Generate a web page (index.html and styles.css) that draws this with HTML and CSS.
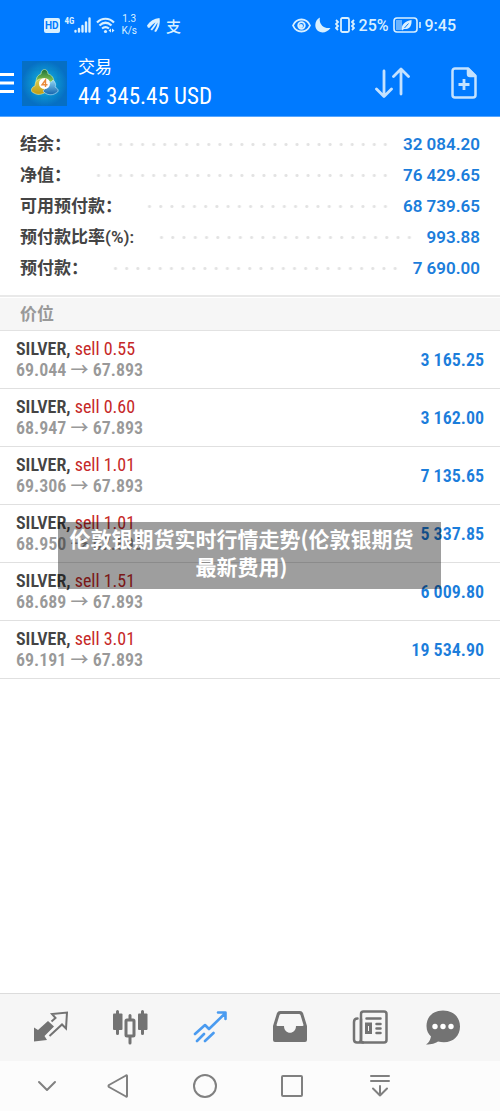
FILE: index.html
```html
<!DOCTYPE html>
<html lang="zh-CN">
<head>
<meta charset="utf-8">
<meta name="viewport" content="width=device-width, initial-scale=1">
<title>交易</title>
<link rel="stylesheet" href="styles.css">
</head>
<body>
<div class="app">
  <div class="status">
    <div class="status-group left">
      <span class="hd">HD</span>
      <span class="signal"><span class="net">4G</span>
        <svg width="17" height="16" viewBox="0 0 17 16" fill="none" stroke="currentColor" stroke-width="2.400" stroke-linecap="round"><path d="M1.500 14v.5M5 12v2.500M8.500 9v5.500M12 5.500v9M15.500 1.500v13"/></svg>
      </span>
      <svg width="20" height="17" viewBox="0 0 20 17" fill="none" stroke="currentColor" stroke-width="2.200"><path d="M1 5.500c5-5 12-5 17 0M3.500 8.500c4-3.700 8-3.700 12 0M6 11.500c2.500-2 4.500-2 7 0"/><circle cx="9.500" cy="14.500" r="1.600" fill="currentColor" stroke="none"/><path d="M15 11.500l-2.500 2 2.500 2zM16 11.500l2.500 2-2.500 2z" fill="currentColor" stroke="none"/></svg>
      <span class="speed"><span>1.3</span><span>K/s</span></span>
      <svg class="spaced" width="14" height="15" viewBox="0 0 14 15" fill="currentColor"><path d="M0 7.500C3 3 7 .5 12.500 0c1 5-.5 10-3.500 14l-1.800-.8C9.500 9.500 10.500 7 10.500 4.500 8.500 8 7 10 5 12.500l-1.500-1C5.500 9 7 7 8.500 4.200 6 6 4 8 2.200 10L.8 9.500z"/></svg>
      <span class="pay">支</span>
    </div>
    <div class="status-group">
      <svg width="19" height="15" viewBox="0 0 19 15" fill="none" stroke="currentColor" stroke-width="1.800"><path d="M1 7.500C4.500-.5 14.500-.5 18 7.500c-3.500 8-13.500 8-17 0z"/><circle cx="9.500" cy="7.500" r="3.300"/><circle cx="9" cy="8" r="2" fill="currentColor" stroke="none"/></svg>
      <svg width="16" height="16" viewBox="0 0 16 16" fill="currentColor"><path d="M5 .5C3.500 6 8 12 15.500 11 11 17.500 2 16.500.5 10-.3 6 1.500 2 5 .5z"/></svg>
      <svg width="20" height="16" viewBox="0 0 20 16" fill="none" stroke="currentColor" stroke-width="1.800"><rect x="6" y="1" width="8" height="14" rx="1.500"/><path d="M1 3l2 2-2 2 2 2-2 2 2 2M19 3l-2 2 2 2-2 2 2 2-2 2"/></svg>
      <span class="clock">25%</span>
      <svg width="28" height="16" viewBox="0 0 28 16" fill="none" stroke="currentColor" stroke-width="1.600"><rect x="1" y="1" width="23" height="14" rx="3"/><path d="M3 3h6v10H3z" fill="#68b3ff" stroke="none"/><path d="M27 5v6"/><path d="M18.500 3c.5 6-2 9.500-7.500 9l-2 1.500C8 7 12 4.500 18.500 3z" fill="currentColor" stroke="none"/><path d="M11.500 11l4-4.500" stroke="#007aff" stroke-width="1"/></svg>
      <span class="clock">9:45</span>
    </div>
  </div>

  <header class="header">
    <button class="menu" aria-label="菜单"><svg width="14" height="20" viewBox="0 0 14 20" fill="currentColor"><path d="M0 0h14v3H0zM0 8.500h14v3H0zM0 17h14v3H0z"/></svg></button>
    <svg class="logo" width="45" height="45" viewBox="0 0 45 45">
      <defs>
        <radialGradient id="sky"><stop offset="0" stop-color="#13bce0"/><stop offset="1" stop-color="#066fc4"/></radialGradient>
        <linearGradient id="green" x2="0" y2="1"><stop stop-color="#186e38"/><stop offset="1" stop-color="#9bd455"/></linearGradient>
        <linearGradient id="gold" x2="0" y2="1"><stop stop-color="#d9cf55"/><stop offset="1" stop-color="#c09a12"/></linearGradient>
        <linearGradient id="blue" x2="0" y2="1"><stop stop-color="#8fd6f5"/><stop offset="1" stop-color="#1263ad"/></linearGradient>
      </defs>
      <path d="M0 0h45v45H0z" fill="url(#sky)"/>
      <path d="M9 0v45M18 0v45M27 0v45M36 0v45M0 9h45M0 18h45M0 27h45M0 36h45" stroke="#0a80bd" stroke-opacity=".35" stroke-width=".6"/>
      <path d="M14 22c0-6 2-8 5-9 0-6 7-6 7 0 4 1 6 4 6 9l-9-3z" fill="url(#green)" stroke="#d9f2b5" stroke-width=".6"/>
      <path d="M22 18c-6-1-9 2-9 7-4 1-5 6-1 7 3 2 7 2 12-1z" fill="url(#gold)" stroke="#f7f0a0" stroke-width=".6"/>
      <path d="M31 19c3 3 3 5 2 7 4 2 4 5 1 6-4 3-10 2-13-2z" fill="url(#blue)" stroke="#c8edff" stroke-width=".6"/>
      <circle cx="22.500" cy="22.500" r="5.500" fill="#fff"/>
      <path d="M23.500 26v-7L20 23.800h5.500" fill="none" stroke="#e98a3a" stroke-width="1.400"/>
    </svg>
    <div class="account">
      <h1 class="title">交易</h1>
      <div class="balance">44 345.45 USD</div>
    </div>
    <div class="actions">
      <button aria-label="排序"><svg width="36" height="32" viewBox="0 0 36 32" fill="none" stroke="currentColor" stroke-width="2.800" stroke-linecap="round" stroke-linejoin="round"><path d="M10 4v25M2.500 22l7.500 7.500 7.500-7.500M27 27V2.500M19.500 9.500L27 2l7.500 7.500"/></svg></button>
      <button aria-label="新订单"><svg width="26" height="32" viewBox="0 0 26 32" fill="none" stroke="currentColor" stroke-width="2.500" stroke-linejoin="round"><path d="M17 1.500H4A2.500 2.500 0 0 0 1.500 4v24A2.500 2.500 0 0 0 4 30.500h18a2.500 2.500 0 0 0 2.500-2.500V9z"/><path d="M17 2v5a2 2 0 0 0 2 2h5z" fill="currentColor"/><path d="M13 12v11M7.500 17.500h11" stroke-width="2.800"/></svg></button>
    </div>
  </header>

  <main class="main">
    <dl class="summary">
      <div class="line"><dt>结余：</dt><dd>32 084.20</dd></div>
      <div class="line"><dt>净值：</dt><dd>76 429.65</dd></div>
      <div class="line"><dt>可用预付款：</dt><dd>68 739.65</dd></div>
      <div class="line"><dt>预付款比率(%):</dt><dd>993.88</dd></div>
      <div class="line"><dt>预付款：</dt><dd>7 690.00</dd></div>
    </dl>
    <h2 class="section">价位</h2>
    <ul class="positions">
      <li class="position"><div><div class="deal">SILVER, <span>sell 0.55</span></div><div class="quote">69.044 <i>→</i> 67.893</div></div><div class="profit">3 165.25</div></li>
      <li class="position"><div><div class="deal">SILVER, <span>sell 0.60</span></div><div class="quote">68.947 <i>→</i> 67.893</div></div><div class="profit">3 162.00</div></li>
      <li class="position"><div><div class="deal">SILVER, <span>sell 1.01</span></div><div class="quote">69.306 <i>→</i> 67.893</div></div><div class="profit">7 135.65</div></li>
      <li class="position"><div><div class="deal">SILVER, <span>sell 1.01</span></div><div class="quote">68.950 <i>→</i> 67.893</div></div><div class="profit">5 337.85</div></li>
      <li class="position"><div><div class="deal">SILVER, <span>sell 1.51</span></div><div class="quote">68.689 <i>→</i> 67.893</div></div><div class="profit">6 009.80</div></li>
      <li class="position"><div><div class="deal">SILVER, <span>sell 3.01</span></div><div class="quote">69.191 <i>→</i> 67.893</div></div><div class="profit">19 534.90</div></li>
    </ul>
    <div class="caption">伦敦银期货实时行情走势(伦敦银期货<br>最新费用)</div>
  </main>

  <nav class="tabs">
    <button aria-label="行情"><svg width="36" height="36" viewBox="0 0 36 36" fill="none" stroke="currentColor" stroke-width="2"><path d="M2 17.500l4 2.500 10-9 6 5.500-9.500 9.500 2.500 4-13 1.500z" fill="currentColor" stroke="none"/><path d="M19.500 11.500l4-3.500-3.500-4L35 2.500l-1 16-4-4L17.500 26"/></svg></button>
    <button aria-label="图表"><svg width="36" height="36" viewBox="0 0 36 36" fill="none" stroke="currentColor" stroke-width="3" stroke-linecap="round"><path d="M5.500 1.500v22M30.500 1.500v22M18 5.500v4M18 27v6"/><rect x="1" y="3.500" width="9.500" height="16.500" rx="1" fill="currentColor" stroke="none"/><rect x="26" y="3.500" width="9.500" height="16.500" rx="1" fill="currentColor" stroke="none"/><rect x="14" y="10" width="8" height="16" rx="1"/></svg></button>
    <button class="active" aria-label="交易" aria-current="page"><svg width="36" height="36" viewBox="0 0 36 36" fill="none" stroke="currentColor" stroke-width="2.600" stroke-linecap="round" stroke-linejoin="round"><path d="M3 24l10-9 4 4L33 3.500M26 2.500h7.500V9M5 31l7-7M13 31l8.500-8"/></svg></button>
    <button aria-label="历史"><svg width="36" height="36" viewBox="0 0 36 36" fill="currentColor"><path fill-rule="evenodd" d="M8 1h20q2 0 3 2l4 13v14q0 2-2 2H3q-2 0-2-2V16L5 3q1-2 3-2zm1 3q-1 0-1.500 1L4.500 15q0 1 1 1H12c0 9 12 9 12 0h6.500q1 0 1-1L28.500 5q-.5-1-1.500-1z"/></svg></button>
    <button aria-label="新闻"><svg width="36" height="36" viewBox="0 0 36 36" fill="none" stroke="currentColor" stroke-width="2.500" stroke-linecap="round"><rect x="9" y="1.500" width="25.500" height="31" rx="2.500"/><path d="M5.500 8.500Q2 8.500 2 12v17.500q0 3 3 3h6M9 9v20.500q0 2-2 3M14.500 8.500h14M24.500 14h4M24.500 18.500h4M24.500 23h4"/><rect x="14.500" y="14" width="4" height="8.500" stroke-width="3"/></svg></button>
    <button aria-label="信息"><svg width="36" height="36" viewBox="0 0 36 36" fill="currentColor"><path d="M18 .5C8 .5 1.500 7 1.500 16c0 5 2 8 4.500 10.500-1 4-2 6-5 8 6 0 9-1 12-3 13 3 22-4 22-15C35 7 28 .5 18 .5z"/><g fill="#fff"><circle cx="10" cy="16.500" r="2.700"/><circle cx="18" cy="16.500" r="2.700"/><circle cx="26" cy="16.500" r="2.700"/></g></svg></button>
  </nav>

  <div class="system">
    <button aria-label="收起"><svg width="24" height="24" viewBox="0 0 24 24"><path d="M4 8l8 8 8-8"/></svg></button>
    <button aria-label="返回"><svg width="24" height="24" viewBox="0 0 24 24"><path d="M21 2v20q0 1-1 .5L3 13q-1-1 0-2L20 1.500q1-.5 1 .5z"/></svg></button>
    <button aria-label="主页"><svg width="24" height="24" viewBox="0 0 24 24"><circle cx="12" cy="12" r="11"/></svg></button>
    <button aria-label="最近"><svg width="24" height="24" viewBox="0 0 24 24"><rect x="2" y="2" width="20" height="20" rx="1"/></svg></button>
    <button aria-label="通知"><svg width="24" height="24" viewBox="0 0 24 24"><path d="M3 2h18M3 7h18M12 12v9.500M5 14.500l7 7 7-7"/></svg></button>
  </div>
</div>
</body>
</html>
```

FILE: styles.css
```css
* {
  box-sizing: border-box;
}

body {
  margin: 0;
  background: #fff;
  color: #444;
  font-family: Roboto, "Noto Sans CJK SC", sans-serif;
}

h1, h2, dl, dd, ul {
  margin: 0;
  padding: 0;
}

button {
  display: flex;
  align-items: center;
  justify-content: center;
  padding: 0;
  border: 0;
  background: none;
  color: inherit;
}

svg {
  display: block;
  flex: none;
}

.app {
  display: flex;
  flex-direction: column;
  min-height: 100vh;
}

/* Phone status bar */
.status {
  display: flex;
  justify-content: space-between;
  height: 50px;
  padding: 0 44px;
  background: #007aff;
  color: #d9f0ff;
}

.status-group {
  display: flex;
  align-items: center;
  gap: 4px;
}

.left {
  gap: 5px;
}

.hd {
  padding: 0 1px;
  border-radius: 2px;
  background: #d9f0ff;
  color: #007aff;
  font-size: 10px;
  font-weight: 700;
  line-height: 15px;
}

.signal {
  display: flex;
  align-items: flex-start;
}

.net {
  font-family: "Roboto Condensed", Roboto, sans-serif;
  font-size: 9px;
  font-weight: 700;
  line-height: 8px;
}

.speed {
  display: flex;
  flex-direction: column;
  align-items: center;
  font-size: 10px;
  line-height: 12px;
}

.spaced {
  margin-left: 5px;
}

.pay {
  font-size: 15px;
  font-weight: 500;
}

.clock {
  font-size: 16px;
  font-weight: 500;
}

/* Account header */
.header {
  display: flex;
  align-items: center;
  height: 67px;
  border-bottom: 1px solid #56a6ff;
  background: #007aff;
  color: #fff;
}

.logo {
  margin: 0 11px 0 8px;
}

.title {
  font-size: 17px;
  font-weight: 400;
  line-height: 27px;
}

.balance {
  font-family: "Roboto Condensed", Roboto, sans-serif;
  font-size: 23px;
  line-height: 32px;
}

.actions {
  display: flex;
  gap: 41px;
  margin-left: auto;
  padding-right: 23px;
  color: #c4e2ff;
}

.main {
  position: relative;
  flex: 1;
}

/* Account figures */
.summary {
  padding: 12px 20px 11px;
  border-bottom: 2px solid #e9e9e9;
  font-size: 17px;
  font-weight: 600;
  line-height: 31px;
}

.line {
  display: flex;
}

.line::after {
  content: "";
  order: 1;
  flex: 1;
  margin: 0 12px 0 22px;
  background: radial-gradient(circle, #e2e2e2 1px, transparent 2px) 0 center / 11px 11px space no-repeat;
}

.line dd {
  order: 2;
  color: #1b7ddb;
}

.section {
  margin-top: 1px;
  padding: 0 20px;
  border-bottom: 1px solid #e2e2e2;
  background: #f6f6f6;
  color: #999;
  font-size: 17px;
  font-weight: 700;
  line-height: 32px;
}

/* Open positions */
.positions {
  list-style: none;
  font-family: "Roboto Condensed", Roboto, sans-serif;
  font-size: 18px;
  font-weight: 600;
  line-height: 20px;
}

.position {
  display: flex;
  align-items: center;
  justify-content: space-between;
  height: 58px;
  padding: 0 16px;
  border-bottom: 1px solid #e0e0e0;
}

.deal span {
  color: #c62828;
  font-weight: 400;
}

.quote {
  color: #999;
}

.quote i {
  font-family: "Noto Sans CJK SC", sans-serif;
  font-style: normal;
  font-weight: 500;
  line-height: 1;
}

.profit {
  color: #1b7ddb;
}

.caption {
  position: absolute;
  top: 405px;
  left: 58px;
  right: 59px;
  padding: 2px 16px 9px 0;
  background: rgba(0, 0, 0, .38);
  color: #fff;
  font-family: "Noto Sans CJK SC", sans-serif;
  font-size: 21px;
  font-weight: 700;
  line-height: 28px;
  text-align: center;
}

/* App tabs */
.tabs {
  display: grid;
  grid-template-columns: 80fr 80fr 80fr 80fr 80fr 66fr;
  height: 68px;
  padding: 0 24px 0 10px;
  border-top: 1px solid #dcdcdc;
  background: #f6f6f6;
  color: #737373;
}

.tabs .active {
  color: #4a9bf0;
}

/* System navigation */
.system {
  display: grid;
  grid-template-columns: 94fr 48fr 126fr 48fr 128fr 56fr;
  height: 50px;
  background: #fcfcfc;
  color: #808080;
}

.system svg {
  fill: none;
  stroke: currentColor;
  stroke-width: 2;
  stroke-linecap: round;
  stroke-linejoin: round;
}
```
